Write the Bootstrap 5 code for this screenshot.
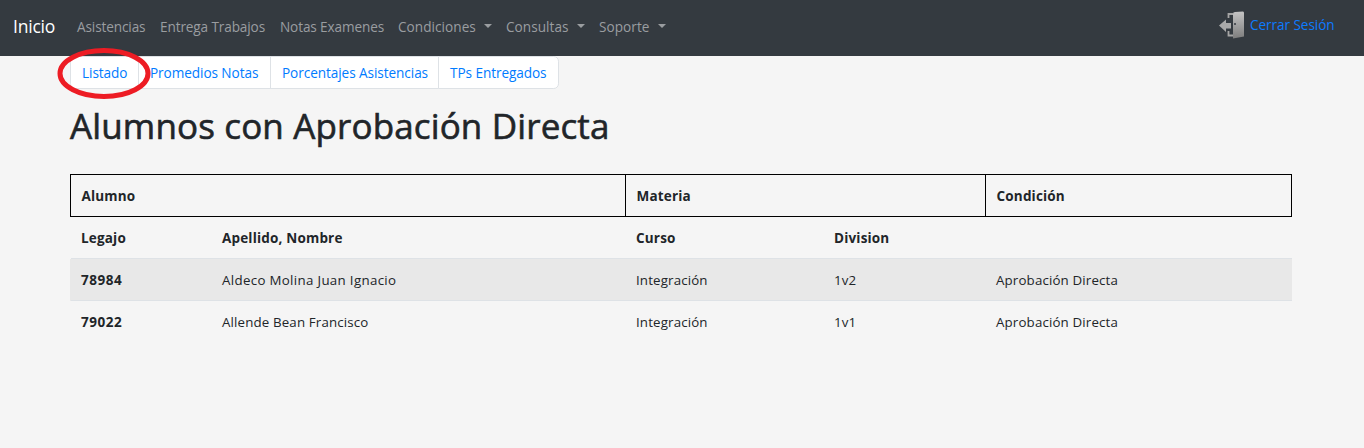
<!DOCTYPE html>
<html lang="es">
<head>
<meta charset="utf-8">
<meta name="viewport" content="width=device-width, initial-scale=1">
<title>Alumnos con Aprobación Directa</title>
<link rel="stylesheet" href="https://cdn.jsdelivr.net/npm/bootstrap@5.3.0/dist/css/bootstrap.min.css">
<style>
  html { font-size: 14px; }
  body { background: #f5f5f5; color: #212529; font-family: "Segoe UI", "Open Sans", "Noto Sans", sans-serif; line-height: 21px; overflow: hidden; }
  a { text-decoration: none; }
  .top-bar { height: 56px; background: #343a40; --bs-navbar-nav-link-padding-x: 7px; }
  .top-bar .navbar-brand { font-size: 17.5px; letter-spacing: -.2px; margin: -4px 14px 0 13px; padding: 0; width: 43px; }
  .top-bar .navbar-nav { margin-top: -4px; }
  .top-bar .nav-link { color: #9a9da0; font-size: 13.6px; padding: 0 7px; white-space: nowrap; letter-spacing: -.12px; }
  .top-bar .dropdown-toggle { display: flex; align-items: center; justify-content: space-between; }
  .top-bar .dropdown .nav-link { letter-spacing: .04px; }
  .top-bar .dropdown-toggle::after { margin: -1px 0 0; border-top-width: 4px; border-right-width: 4px; border-left-width: 4px; }
  .w-asis { width: 83px; } .w-entr { width: 120px; } .w-nota { width: 118px; }
  .w-cond { width: 108px; } .w-cons { width: 93px; } .w-sopo { width: 81px; }
  .logout { color: #0d7bff; font-size: 13.6px; letter-spacing: -.07px; margin: -6px 29px 0 auto; white-space: nowrap; }
  .logout span { width: 85px; margin-top: -1px; }
  .main-col { margin-left: 70px; width: 1222px; }
  .tab-strip { height: 33px; }
  .tab-strip .page-link { color: #007bff; background: #fff; border-color: #dee2e6; padding: 0 0 0 11px; height: 33px; line-height: 31px; font-size: 13.6px; letter-spacing: -.07px; white-space: nowrap; }
  .ring { position: absolute; left: -14px; top: -9px; }
  h1 { font-size: 35px; line-height: 42px; margin: 16px 0 27px; letter-spacing: .14px; font-weight: 500; white-space: nowrap; -webkit-text-stroke: .6px #212529; }
  .grid-alumnos { width: 1221px; table-layout: fixed; border-collapse: collapse; font-size: 13.3px; margin: 0; }
  .grid-alumnos > :not(caption) > * > * { height: 42px; padding: 1px 10.5px 0; vertical-align: middle; background: transparent; box-shadow: none; color: #212529; border: 0; white-space: nowrap; }
  .grid-alumnos > thead > tr > th { border: 1px solid #000; }
  .grid-alumnos > tbody > .line > * { border-top: 1px solid #dee2e6; }
  .grid-alumnos > tbody > .shade > * { background: #e8e8e8; }
  .grid-alumnos > tbody > .shade > :first-child { box-shadow: -1px 0 #e8e8e8; }
  .grid-alumnos td { letter-spacing: .15px; }
  .grid-alumnos .name-cell { letter-spacing: .33px; }
  .grid-alumnos th { font-size: 13.5px; letter-spacing: .18px; }
  .grid-alumnos tbody .line th { letter-spacing: .5px; }
</style>
</head>
<body>
<nav class="top-bar navbar navbar-expand p-0">
  <a class="navbar-brand text-white" href="#">Inicio</a>
  <ul class="navbar-nav">
    <li class="nav-item w-asis"><a class="nav-link" href="#">Asistencias</a></li>
    <li class="nav-item w-entr"><a class="nav-link" href="#">Entrega Trabajos</a></li>
    <li class="nav-item w-nota"><a class="nav-link" href="#">Notas Examenes</a></li>
    <li class="nav-item dropdown w-cond"><a class="nav-link dropdown-toggle" href="#">Condiciones</a></li>
    <li class="nav-item dropdown w-cons"><a class="nav-link dropdown-toggle" href="#">Consultas</a></li>
    <li class="nav-item dropdown w-sopo"><a class="nav-link dropdown-toggle" href="#">Soporte</a></li>
  </ul>
  <a class="logout d-flex align-items-center" href="#">
    <svg width="32" height="32" viewBox="0 0 32 32" aria-hidden="true">
      <defs><linearGradient id="door" x1="0" y1="0" x2="0" y2="1"><stop offset="0" stop-color="#c4c4c4"/><stop offset="1" stop-color="#7d7d7d"/></linearGradient></defs>
      <path d="M10.500 9V5H15M10.500 22v4.500H15" fill="none" stroke="#a5a5a5" stroke-width="1.800"/>
      <path d="M15 4.500Q15 3.200 17 3L25 2.500Q26 2.500 26 4V27.500L15 29.500z" fill="url(#door)"/>
      <path d="M1 16.500 8 10.500v3.500h5v5.500H8V23z" fill="#a9a9a9"/>
      <circle cx="17" cy="15" r="1" fill="#343a40"/>
    </svg>
    <span>Cerrar Sesión</span>
  </a>
</nav>
<main class="main-col">
  <div class="position-relative">
    <ul class="pagination tab-strip m-0">
      <li class="page-item"><a class="page-link" style="width:69px" href="#">Listado</a></li>
      <li class="page-item"><a class="page-link" style="width:133px" href="#">Promedios Notas</a></li>
      <li class="page-item"><a class="page-link" style="width:169px" href="#">Porcentajes Asistencias</a></li>
      <li class="page-item"><a class="page-link" style="width:121px" href="#">TPs Entregados</a></li>
    </ul>
    <svg class="ring" width="96" height="54" viewBox="0 0 96 54" aria-hidden="true"><ellipse cx="48" cy="26.500" rx="44" ry="23" fill="none" stroke="#ed1c24" stroke-width="5"/></svg>
  </div>
  <h1>Alumnos con Aprobación Directa</h1>
  <table class="table grid-alumnos">
    <colgroup><col style="width:141px"><col style="width:414px"><col style="width:198px"><col style="width:162px"><col style="width:306px"></colgroup>
    <thead><tr><th colspan="2">Alumno</th><th colspan="2">Materia</th><th>Condición</th></tr></thead>
    <tbody>
      <tr><th>Legajo</th><th>Apellido, Nombre</th><th>Curso</th><th>Division</th><th></th></tr>
      <tr class="line shade"><th>78984</th><td class="name-cell">Aldeco Molina Juan Ignacio</td><td>Integración</td><td>1v2</td><td>Aprobación Directa</td></tr>
      <tr class="line"><th>79022</th><td>Allende Bean Francisco</td><td>Integración</td><td>1v1</td><td>Aprobación Directa</td></tr>
    </tbody>
  </table>
</main>
<script src="https://cdn.jsdelivr.net/npm/bootstrap@5.3.0/dist/js/bootstrap.bundle.min.js"></script>
</body>
</html>
